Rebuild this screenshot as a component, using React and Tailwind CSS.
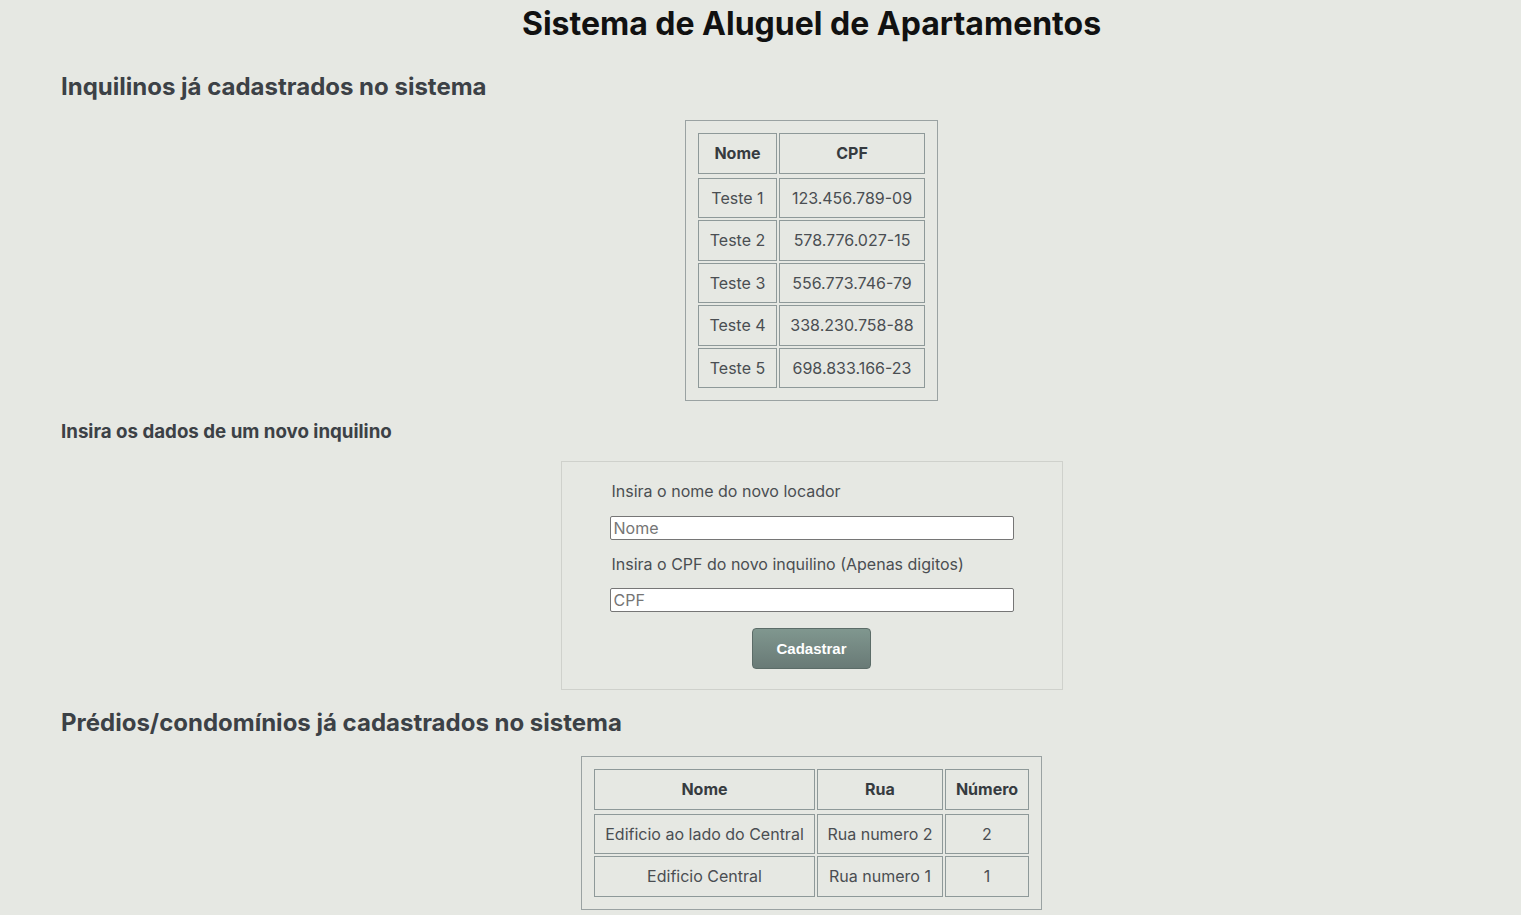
const inquilinos = [
    { nome: 'Teste 1', cpf: '123.456.789-09' },
    { nome: 'Teste 2', cpf: '578.776.027-15' },
    { nome: 'Teste 3', cpf: '556.773.746-79' },
    { nome: 'Teste 4', cpf: '338.230.758-88' },
    { nome: 'Teste 5', cpf: '698.833.166-23' },
];

const predios = [
    { nome: 'Edificio ao lado do Central', rua: 'Rua numero 2', numero: '2' },
    { nome: 'Edificio Central', rua: 'Rua numero 1', numero: '1' },
];

const cell = 'flex h-[40.5px] items-center justify-center border border-[#8e9999] text-[16px]';
const headCell = cell + ' mb-[2px] font-bold text-[#363b40]';

export default function App() {
    return (
        <div className="min-h-screen bg-[#e6e8e3] font-['Inter',sans-serif] text-[#4a4e52]">
            <h1 className="pl-[102px] pt-[5px] text-center text-[32px] font-bold leading-[38px] text-[#111]">
                Sistema de Aluguel de Apartamentos
            </h1>

            <h2 className="mt-[30px] pl-[61px] text-[24px] font-bold leading-[28px] text-[#3c4146]">
                Inquilinos já cadastrados no sistema
            </h2>

            <div className="mt-[19px] flex justify-center pl-[102px]">
                <div className="border border-[#9aa2a2] p-[12px]">
                    <div className="grid grid-cols-[79px_146px] gap-x-[2px] gap-y-[2px]">
                        <div className={headCell}>Nome</div>
                        <div className={headCell}>CPF</div>
                        {inquilinos.map((i) => (
                            <>
                                <div key={i.nome} className={cell}>{i.nome}</div>
                                <div key={i.cpf} className={cell}>{i.cpf}</div>
                            </>
                        ))}
                    </div>
                </div>
            </div>

            <h3 className="mt-[20px] pl-[61px] text-[18.72px] font-bold leading-[22px] text-[#3c4146]">
                Insira os dados de um novo inquilino
            </h3>

            <div className="mt-[18px] flex justify-center pl-[102px]">
                <form className="w-[502px] border border-[#cfd1cc] px-[48px] pt-[17px] pb-[20px]" onSubmit={(e) => e.preventDefault()}>
                    <label className="block pl-[2px] text-[16px] leading-[24px] text-[#4a4e52]">Insira o nome do novo locador</label>
                    <input
                        type="text"
                        placeholder="Nome"
                        className="mt-[13px] block h-[24px] w-[404px] rounded-[2px] border border-[#767676] bg-white px-[3px] text-[16px] text-[#333] placeholder:text-[#757575]"
                    />
                    <label className="mt-[12px] block pl-[2px] text-[16px] leading-[24px] text-[#4a4e52]">Insira o CPF do novo inquilino (Apenas digitos)</label>
                    <input
                        type="text"
                        placeholder="CPF"
                        className="mt-[12px] block h-[24px] w-[404px] rounded-[2px] border border-[#767676] bg-white px-[3px] text-[16px] text-[#333] placeholder:text-[#757575]"
                    />
                    <div className="mt-[16px] flex justify-center">
                        <button
                            type="submit"
                            className="h-[41px] w-[119px] rounded-[4px] border border-[#5c6c68] bg-gradient-to-b from-[#80978f] to-[#697a76] pt-[1px] font-['Liberation_Sans',Arial,sans-serif] text-[15px] font-bold text-white"
                        >
                            Cadastrar
                        </button>
                    </div>
                </form>
            </div>

            <h2 className="mt-[19px] pl-[61px] text-[24px] font-bold leading-[28px] text-[#3c4146]">
                Prédios/condomínios já cadastrados no sistema
            </h2>

            <div className="mt-[19px] flex justify-center pl-[102px] pb-[20px]">
                <div className="border border-[#9aa2a2] p-[12px]">
                    <div className="grid grid-cols-[221px_126px_84px] gap-x-[2px] gap-y-[2px]">
                        <div className={headCell}>Nome</div>
                        <div className={headCell}>Rua</div>
                        <div className={headCell}>Número</div>
                        {predios.map((p) => (
                            <>
                                <div key={p.nome} className={cell}>{p.nome}</div>
                                <div key={p.rua} className={cell}>{p.rua}</div>
                                <div key={p.nome + p.numero} className={cell}>{p.numero}</div>
                            </>
                        ))}
                    </div>
                </div>
            </div>
        </div>
    );
}
